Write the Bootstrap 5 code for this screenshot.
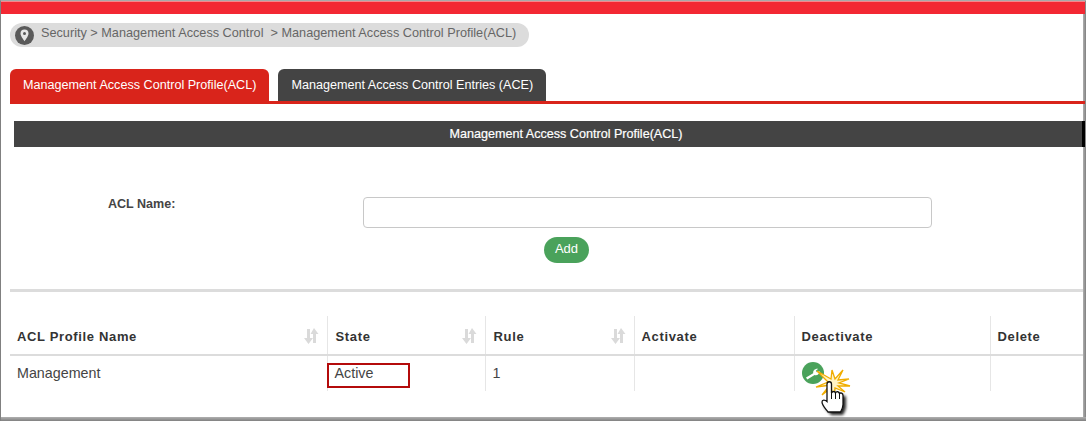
<!DOCTYPE html>
<html lang="en">
<head>
<meta charset="utf-8">
<title>Management Access Control Profile(ACL)</title>
<link href="https://cdn.jsdelivr.net/npm/bootstrap@5.3.0/dist/css/bootstrap.min.css" rel="stylesheet">
<style>
html,body{margin:0;background:#fff;overflow:hidden}
body{font-family:"Liberation Sans",Arial,sans-serif;font-size:12px;color:#444}
.shot{position:relative;width:1086px;height:421px;background:#fff;overflow:hidden;border-left:1px solid #808080;border-top:1px solid #a8a8a8;display:flex;flex-direction:column}
.shot::after{content:"";position:absolute;top:0;right:0;bottom:0;width:3px;background:linear-gradient(90deg,#b0b0b0,#808080);z-index:0}
.edge-bottom{position:absolute;left:0;right:0;bottom:0;height:4px;background:linear-gradient(#b0b0b0,#808080);z-index:2}
.topbar{height:13px;background:#f32833;border-top:1px solid #f7868c;flex:none;margin-right:1px;position:relative;z-index:1}
.main{padding:9px 1px 0 9px;flex:1;display:flex;flex-direction:column;position:relative;z-index:1}
.crumb{display:inline-flex;align-items:center;align-self:flex-start;height:24px;background:#dcdcdc;border-radius:12px;padding:0 13px 2px 5px;color:#666;font-size:12.7px;white-space:pre}
.crumb svg{margin-right:7px;margin-bottom:-2px;flex:none}
.acl-tabs{margin-top:22px;height:35px;border-bottom:3px solid #d9241b;gap:9px;flex-wrap:nowrap}
.acl-tabs .nav-link{height:32px;padding:0 13px;line-height:33px;border-radius:6px 6px 0 0;color:#fff;font-size:12.62px;background:#444;border:0;white-space:nowrap}
.acl-tabs .nav-link.active{background:#d9241b;color:#fff}
.title-bar{margin:17px 0 0 4px;height:26px;background:#444;color:#fff;font-size:12.6px;line-height:27px;text-align:center;padding-left:36px;border-right:3px solid #000;-webkit-text-stroke:.2px #fff}
.form-line{display:flex;margin-top:50px;height:31px}
.form-line label{width:353px;padding:0 0 0 98px;font-weight:700;font-size:12.55px;color:#444;line-height:14px;margin-top:0}
.form-line .form-control{width:569px;height:31px;border:1px solid #c8c8c8;border-radius:4px;padding:0 8px;flex:none}
.add-wrap{display:flex;justify-content:flex-start;padding-left:534px;margin-top:9px}
.add-btn{width:45px;height:26px;padding:0 0 3px;background:#4aa25b;border:0;color:#fff;font-size:13px;line-height:22px}
.add-btn:hover{background:#4aa25b;color:#fff}
.rule{height:3px;background:#dcdcdc;margin-top:26px;flex:none;margin-right:2px}
.acl-table{margin:24px 2px 0 0;table-layout:fixed;width:1073px;border-collapse:collapse;--bs-table-color:#444}
.acl-table th,.acl-table td{border:0;border-left:1px solid #e6e6e6;padding:0 7px;box-shadow:none;position:relative}
.acl-table th:first-child,.acl-table td:first-child{border-left:0}
.acl-table thead th{height:39px;border-bottom:2px solid #dcdcdc;font-size:13px;font-weight:700;letter-spacing:.65px;color:#333;vertical-align:middle;padding-top:3px}
.acl-table thead th:nth-child(2),.acl-table thead th:nth-child(3){padding-left:8px}
.acl-table tbody td{height:36px;vertical-align:top;padding-top:8px;font-size:14.3px;line-height:18px;color:#444}
.sort-ic{position:absolute;right:8px;top:12px}
.active-box{position:absolute;left:-1px;top:7px;width:83px;height:25px;border:2px solid #b40b0b}
.wrench{position:absolute;left:7px;top:6px}
.cursor{position:absolute;left:812px;top:365px;z-index:3}
</style>
</head>
<body>
<div class="shot">
  <div class="topbar"></div>
  <div class="main">
    <div class="crumb">
      <svg width="19" height="19" viewBox="0 0 19 19"><circle cx="9.5" cy="9.5" r="9.5" fill="#5a5a5a"/><path d="M9.5 3.600a4 4 0 0 0-4 4c0 2.800 4 7.600 4 7.600s4-4.800 4-7.600a4 4 0 0 0-4-4z" fill="#e8e8e8"/><circle cx="9.500" cy="7.600" r="1.500" fill="#5a5a5a"/></svg><span>Security &gt; Management Access Control  &gt; Management Access Control Profile(ACL)</span>
    </div>
    <ul class="nav acl-tabs">
      <li class="nav-item"><a class="nav-link active" href="#">Management Access Control Profile(ACL)</a></li>
      <li class="nav-item"><a class="nav-link" href="#">Management Access Control Entries (ACE)</a></li>
    </ul>
    <div class="title-bar">Management Access Control Profile(ACL)</div>
    <form>
      <div class="form-line">
        <label for="aclName">ACL Name:</label>
        <input id="aclName" type="text" class="form-control">
      </div>
      <div class="add-wrap"><button type="button" class="btn rounded-pill add-btn">Add</button></div>
    </form>
    <div class="rule"></div>
    <table class="table acl-table">
      <colgroup><col style="width:317px"><col style="width:158px"><col style="width:149px"><col style="width:160px"><col style="width:196px"><col></colgroup>
      <thead>
        <tr>
          <th>ACL Profile Name<svg class="sort-ic" width="15" height="16" viewBox="0 0 15 16"><path d="M3 1h3v9h3l-4.500 6L0 10h3zM10 0l4.500 6H12v9H9V6H6.500z" fill="#dadada"/></svg></th>
          <th>State<svg class="sort-ic" width="15" height="16" viewBox="0 0 15 16"><path d="M3 1h3v9h3l-4.500 6L0 10h3zM10 0l4.500 6H12v9H9V6H6.500z" fill="#dadada"/></svg></th>
          <th>Rule<svg class="sort-ic" width="15" height="16" viewBox="0 0 15 16"><path d="M3 1h3v9h3l-4.500 6L0 10h3zM10 0l4.500 6H12v9H9V6H6.500z" fill="#dadada"/></svg></th>
          <th>Activate</th>
          <th>Deactivate</th>
          <th>Delete</th>
        </tr>
      </thead>
      <tbody>
        <tr>
          <td>Management</td>
          <td>Active<span class="active-box"></span></td>
          <td>1</td>
          <td></td>
          <td><svg class="wrench" width="22" height="22" viewBox="0 0 22 22"><circle cx="11" cy="11" r="11" fill="#4aa25b"/><path d="M4 15.500l7.200-4.300c-.4-2.200 1.300-4.700 5-4.400l-2.300 2 1 1.500 2.900-1.100c.1 2.800-2.900 4.600-5.200 3.700L5.300 17.500z" fill="#fff"/></svg></td>
          <td></td>
        </tr>
      </tbody>
    </table>
  </div>
  <svg class="cursor" width="42" height="52" viewBox="0 0 42 52">
    <defs><filter id="hs" x="-30%" y="-30%" width="170%" height="170%"><feGaussianBlur stdDeviation="1.800"/></filter></defs>
    <path d="M17 21c0-3 4-3 4 0v8c1-2 4-2 4 0 1-2 4-1 4 1 1-1 4-1 4 2v8c0 3-1 5-3 9H18c-2-3-7-7-7-11 0-2 3-2 5 1z" fill="#000" opacity=".85" filter="url(#hs)"/>
    <path d="M18 19L3 21l12-5-11-11 14 8L19 4l3 9 8-9-5 10 11-1-10 4 11 3-12 0 7 6-10-4-1 9-3-9-9 7 7-9z" fill="#fff3c4" stroke="#f0ad00" stroke-width="1.300" stroke-linejoin="miter"/>
    <path d="M14 35V18c0-3 4.500-3 4.500 0v9c1-2 3.500-2 4 0 1-2 3.500-1.500 4 .5 1-1 3.500-.5 3.500 2v9c0 3-1 5-2.500 7.500H15c-2-3-6-6.500-6-10 0-2.500 3-2.500 5-.5z" fill="#fff" stroke="#111" stroke-width="1.300"/>
    <path d="M18.500 27v6M22.500 27v6M26.500 28v5" stroke="#111" stroke-width="1"/>
  </svg>
  <div class="edge-bottom"></div>
</div>
<script src="https://cdn.jsdelivr.net/npm/bootstrap@5.3.0/dist/js/bootstrap.bundle.min.js"></script>
</body>
</html>
